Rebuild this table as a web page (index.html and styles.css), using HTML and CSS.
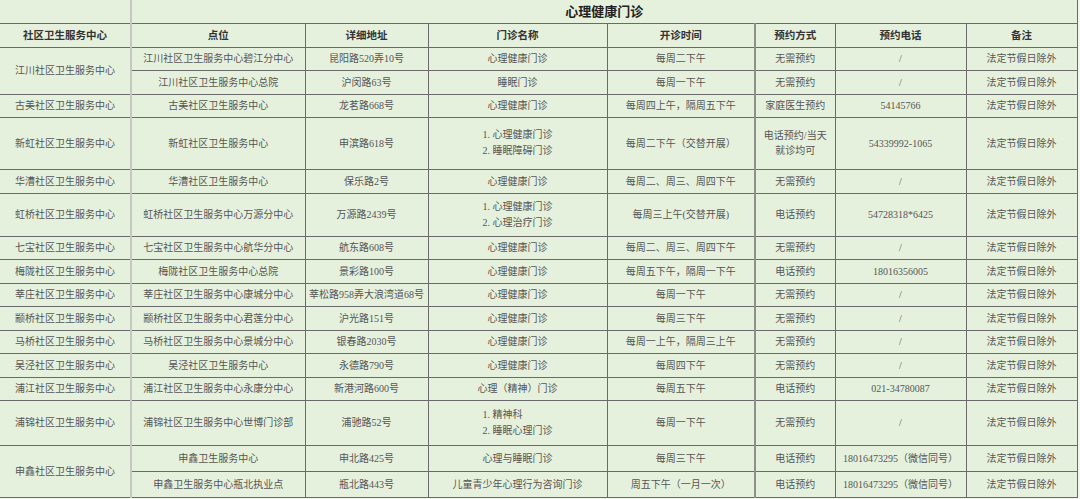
FILE: index.html
```html
<!DOCTYPE html>
<html lang="zh-CN">
<head>
<meta charset="utf-8">
<title>心理健康门诊</title>
<link rel="stylesheet" href="styles.css">
</head>
<body>
<table class="sheet">
  <colgroup>
    <col class="w1"><col class="w2"><col class="w3"><col class="w4"><col class="w5"><col class="w6"><col class="w7"><col class="w8">
  </colgroup>
  <tr class="r-title">
    <td class="c1 blank"></td>
    <td class="title sep" colspan="7">心理健康门诊</td>
  </tr>
  <tr class="r-head">
    <th class="c1">社区卫生服务中心</th>
    <th class="sep">点位</th>
    <th>详细地址</th>
    <th>门诊名称</th>
    <th>开诊时间</th>
    <th class="sep2">预约方式</th>
    <th>预约电话</th>
    <th>备注</th>
  </tr>
  <tr class="h23">
    <td class="c1" rowspan="2">江川社区卫生服务中心</td>
    <td class="sep">江川社区卫生服务中心碧江分中心</td>
    <td>昆阳路520弄10号</td>
    <td>心理健康门诊</td>
    <td>每周二下午</td>
    <td class="sep2">无需预约</td>
    <td>/</td>
    <td>法定节假日除外</td>
  </tr>
  <tr class="h24">
    <td class="sep">江川社区卫生服务中心总院</td>
    <td>沪闵路63号</td>
    <td>睡眠门诊</td>
    <td>每周一下午</td>
    <td class="sep2">无需预约</td>
    <td>/</td>
    <td>法定节假日除外</td>
  </tr>
  <tr class="h23">
    <td class="c1">古美社区卫生服务中心</td>
    <td class="sep">古美社区卫生服务中心</td>
    <td>龙茗路668号</td>
    <td>心理健康门诊</td>
    <td>每周四上午，隔周五下午</td>
    <td class="sep2">家庭医生预约</td>
    <td>54145766</td>
    <td>法定节假日除外</td>
  </tr>
  <tr class="h52">
    <td class="c1">新虹社区卫生服务中心</td>
    <td class="sep">新虹社区卫生服务中心</td>
    <td>申滨路618号</td>
    <td><span class="list">1. 心理健康门诊<br>2. 睡眠障碍门诊</span></td>
    <td>每周二下午（交替开展）</td>
    <td class="sep2">电话预约/当天<br>就诊均可</td>
    <td>54339992-1065</td>
    <td>法定节假日除外</td>
  </tr>
  <tr class="h24">
    <td class="c1">华漕社区卫生服务中心</td>
    <td class="sep">华漕社区卫生服务中心</td>
    <td>保乐路2号</td>
    <td>心理健康门诊</td>
    <td>每周二、周三、周四下午</td>
    <td class="sep2">无需预约</td>
    <td>/</td>
    <td>法定节假日除外</td>
  </tr>
  <tr class="h43">
    <td class="c1">虹桥社区卫生服务中心</td>
    <td class="sep">虹桥社区卫生服务中心万源分中心</td>
    <td>万源路2439号</td>
    <td><span class="list">1. 心理健康门诊<br>2. 心理治疗门诊</span></td>
    <td>每周三上午(交替开展)</td>
    <td class="sep2">电话预约</td>
    <td>54728318*6425</td>
    <td>法定节假日除外</td>
  </tr>
  <tr class="h23">
    <td class="c1">七宝社区卫生服务中心</td>
    <td class="sep">七宝社区卫生服务中心航华分中心</td>
    <td>航东路608号</td>
    <td>心理健康门诊</td>
    <td>每周二、周三、周四下午</td>
    <td class="sep2">无需预约</td>
    <td>/</td>
    <td>法定节假日除外</td>
  </tr>
  <tr class="h24">
    <td class="c1">梅陇社区卫生服务中心</td>
    <td class="sep">梅陇社区卫生服务中心总院</td>
    <td>景彩路100号</td>
    <td>心理健康门诊</td>
    <td>每周五下午，隔周一下午</td>
    <td class="sep2">电话预约</td>
    <td>18016356005</td>
    <td>法定节假日除外</td>
  </tr>
  <tr class="h23">
    <td class="c1">莘庄社区卫生服务中心</td>
    <td class="sep">莘庄社区卫生服务中心康城分中心</td>
    <td>莘松路958弄大浪湾道68号</td>
    <td>心理健康门诊</td>
    <td>每周一下午</td>
    <td class="sep2">无需预约</td>
    <td>/</td>
    <td>法定节假日除外</td>
  </tr>
  <tr class="h24">
    <td class="c1">颛桥社区卫生服务中心</td>
    <td class="sep">颛桥社区卫生服务中心君莲分中心</td>
    <td>沪光路151号</td>
    <td>心理健康门诊</td>
    <td>每周三下午</td>
    <td class="sep2">无需预约</td>
    <td>/</td>
    <td>法定节假日除外</td>
  </tr>
  <tr class="h23">
    <td class="c1">马桥社区卫生服务中心</td>
    <td class="sep">马桥社区卫生服务中心景城分中心</td>
    <td>银春路2030号</td>
    <td>心理健康门诊</td>
    <td>每周一上午，隔周三上午</td>
    <td class="sep2">无需预约</td>
    <td>/</td>
    <td>法定节假日除外</td>
  </tr>
  <tr class="h24">
    <td class="c1">吴泾社区卫生服务中心</td>
    <td class="sep">吴泾社区卫生服务中心</td>
    <td>永德路790号</td>
    <td>心理健康门诊</td>
    <td>每周四下午</td>
    <td class="sep2">无需预约</td>
    <td>/</td>
    <td>法定节假日除外</td>
  </tr>
  <tr class="h23">
    <td class="c1">浦江社区卫生服务中心</td>
    <td class="sep">浦江社区卫生服务中心永康分中心</td>
    <td>新港河路600号</td>
    <td>心理（精神）门诊</td>
    <td>每周五下午</td>
    <td class="sep2">电话预约</td>
    <td>021-34780087</td>
    <td>法定节假日除外</td>
  </tr>
  <tr class="h45">
    <td class="c1">浦锦社区卫生服务中心</td>
    <td class="sep">浦锦社区卫生服务中心世博门诊部</td>
    <td>浦驰路52号</td>
    <td><span class="list">1. 精神科<br>2. 睡眠心理门诊</span></td>
    <td>每周一下午</td>
    <td class="sep2">无需预约</td>
    <td>/</td>
    <td>法定节假日除外</td>
  </tr>
  <tr class="h26">
    <td class="c1" rowspan="2">申鑫社区卫生服务中心</td>
    <td class="sep">申鑫卫生服务中心</td>
    <td>申北路425号</td>
    <td>心理与睡眠门诊</td>
    <td>每周三下午</td>
    <td class="sep2">电话预约</td>
    <td>18016473295（微信同号）</td>
    <td>法定节假日除外</td>
  </tr>
  <tr class="h26">
    <td class="sep">申鑫卫生服务中心瓶北执业点</td>
    <td>瓶北路443号</td>
    <td>儿童青少年心理行为咨询门诊</td>
    <td>周五下午（一月一次）</td>
    <td class="sep2">电话预约</td>
    <td>18016473295（微信同号）</td>
    <td>法定节假日除外</td>
  </tr>
</table>
</body>
</html>
```

FILE: styles.css
```css
html, body {
  margin: 0;
  padding: 0;
  background: #f3f7ef;
}

body {
  font-family: "Liberation Serif", "Noto Sans CJK SC", serif;
  color: #555;
}

.sheet {
  border-collapse: collapse;
  table-layout: fixed;
  width: 1077px;
  background: #e6f1dd;
  font-size: 10px;
}

.w1 { width: 131px; }
.w2 { width: 174px; }
.w3 { width: 123px; }
.w4 { width: 179px; }
.w5 { width: 148px; }
.w6 { width: 80px; }
.w7 { width: 131px; }
.w8 { width: 111px; }

.sheet td,
.sheet th {
  border: 1px solid #6a6a6a;
  padding: 0;
  text-align: center;
  vertical-align: middle;
  line-height: 15px;
  white-space: nowrap;
  overflow: hidden;
}

.sheet .c1 {
  border-left: none;
}

.sheet .sep {
  border-left: 2px solid #c4c8c0;
}

.sheet .sep2 {
  border-left: 2px solid #8d918a;
}

.sheet tr > :last-child {
  border-right: 1px solid #6a6a6a;
}

.r-title { height: 23px; }
.r-title td { border-top: none; }
.r-title .blank { border-right: none; }

.title {
  font-size: 13px;
  font-weight: bold;
  color: #222;
}

.r-head { height: 24px; }

.sheet th {
  font-size: 10.5px;
  font-weight: bold;
  color: #333;
}

.h23 { height: 23px; }
.h24 { height: 24px; }
.h26 { height: 26px; }
.h43 { height: 43px; }
.h45 { height: 45px; }
.h52 { height: 52px; }

.list {
  display: inline-block;
  text-align: left;
  line-height: 16px;
}
```
